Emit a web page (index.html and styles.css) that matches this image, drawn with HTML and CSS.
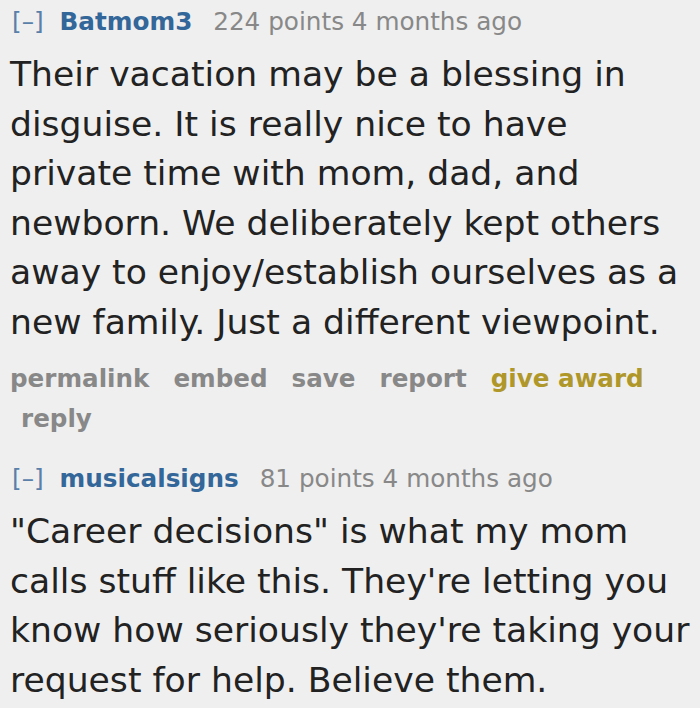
FILE: index.html
```html
<!DOCTYPE html>
<html>
<head>
<meta charset="utf-8">
<link rel="stylesheet" href="styles.css">
</head>
<body>
<div class="comment">
  <div class="tagline">
    <span class="expand">[–]</span>
    <span class="author">Batmom3</span>
    <span class="score">224 points 4 months ago</span>
  </div>
  <div class="md">Their vacation may be a blessing in disguise. It is really nice to have private time with mom, dad, and newborn. We deliberately kept others away to enjoy/establish ourselves as a new family. Just a different viewpoint.</div>
  <ul class="buttons">
    <li>permalink</li>
    <li>embed</li>
    <li>save</li>
    <li>report</li>
    <li class="gild">give award</li>
    <li>reply</li>
  </ul>
</div>
<div class="comment second">
  <div class="tagline">
    <span class="expand">[–]</span>
    <span class="author">musicalsigns</span>
    <span class="score">81 points 4 months ago</span>
  </div>
  <div class="md">"Career decisions" is what my mom calls stuff like this. They're letting you know how seriously they're taking your request for help. Believe them.</div>
</div>
</body>
</html>
```
FILE: styles.css
```css
html, body {
  margin: 0;
  padding: 0;
  background: #efefef;
}
body {
  width: 700px;
  height: 708px;
  overflow: hidden;
  font-family: "DejaVu Sans", Verdana, sans-serif;
}
.comment {
  padding: 0 0 0 10px;
}
.second {
  margin-top: 18px;
}
.tagline {
  font-size: 24.7px;
  line-height: 44px;
  padding-left: 2px;
  white-space: nowrap;
}
.expand {
  color: #5a7fa8;
  margin-right: 8px;
}
.author {
  color: #336699;
  font-weight: bold;
  margin-right: 13px;
}
.score {
  color: #888888;
}
.md {
  margin-top: 6px;
  font-size: 34.6px;
  line-height: 49.5px;
  color: #222222;
}
.buttons {
  list-style: none;
  margin: 12px 0 0 0;
  padding: 0;
  display: flex;
  flex-wrap: wrap;
  column-gap: 24px;
  font-weight: bold;
  font-size: 24.6px;
  line-height: 40px;
  color: #888888;
}
.buttons li:last-child {
  padding-left: 11px;
}
.buttons .gild {
  color: #b0972a;
}
```
